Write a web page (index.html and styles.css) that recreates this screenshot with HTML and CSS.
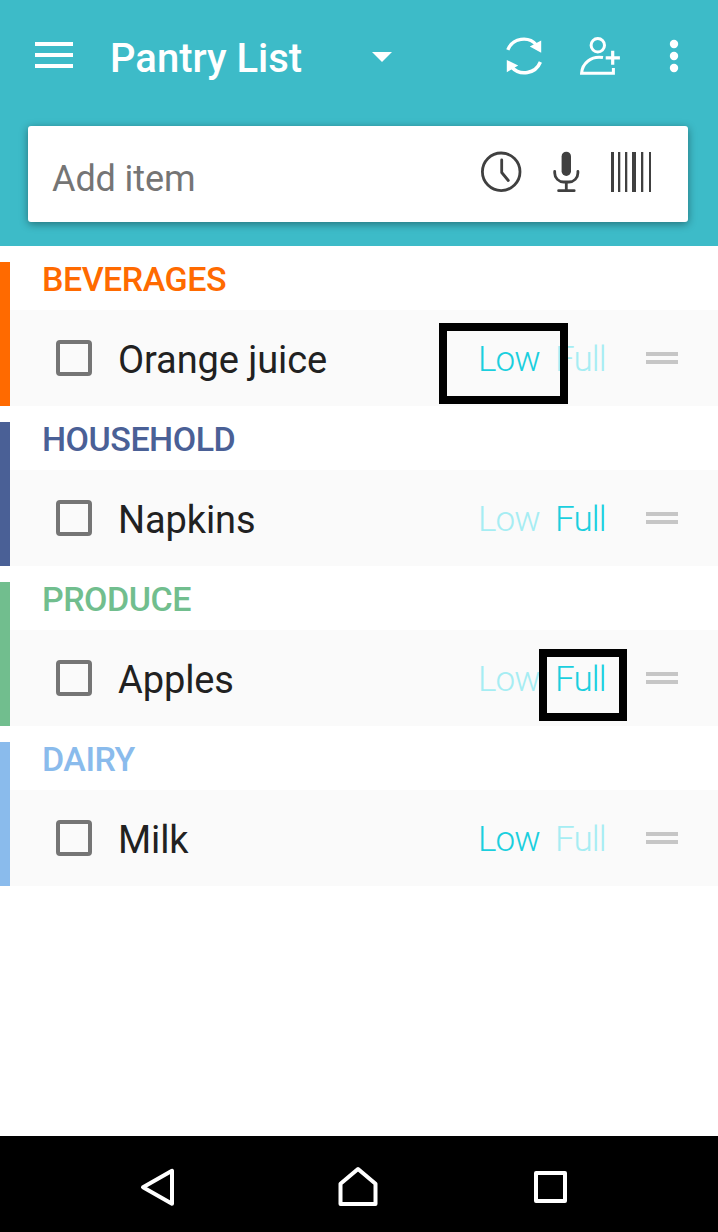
FILE: index.html
```
<!DOCTYPE html>
<html lang="en">
<head>
<meta charset="UTF-8">
<meta name="viewport" content="width=device-width, initial-scale=1.0">
<title>Pantry List</title>
<link rel="stylesheet" href="styles.css">
</head>
<body>

<header class="header">
  <div class="toolbar">
    <svg class="menu" width="38" height="26" viewBox="0 0 38 26" fill="#fff">
      <path d="M0 0h38v4H0zM0 11h38v4H0zM0 22h38v4H0z"/>
    </svg>
    <h1>Pantry List</h1>
    <svg class="caret" width="20" height="10" viewBox="0 0 20 10"><path d="M0 0h20L10 10z" fill="#fff"/></svg>
    <div class="actions">
      <svg width="40" height="40" viewBox="0 0 40 40" fill="none" stroke="#fff" stroke-width="3.4">
        <path d="M2.8 13.8A17.2 17.2 0 0 1 31.600 9M35.400 26A17.2 17.2 0 0 1 6.600 31"/>
        <path d="M36.2 4.6v12.2L24.8 10.5zM1.8 24v12.2L13.2 29.6z" fill="#fff" stroke="none"/>
      </svg>
      <svg width="42" height="40" viewBox="0 0 42 40" fill="none" stroke="#fff" stroke-width="3">
        <circle cx="17.8" cy="9.3" r="6.7"/>
        <path d="M23 21.6C11 19.5 2.2 27.5 1.6 37.2H33.4V32"/>
        <path d="M32.7 14.7v14M25.7 21.8h14.2" stroke-width="3.2"/>
      </svg>
      <svg width="10" height="40" viewBox="0 0 10 40" fill="#fff">
        <circle cx="5" cy="8" r="4.2"/>
        <circle cx="5" cy="20" r="4.2"/>
        <circle cx="5" cy="32" r="4.2"/>
      </svg>
    </div>
  </div>

  <div class="add-item">
    <span class="placeholder">Add item</span>
    <svg class="clock" width="42" height="42" viewBox="0 0 42 42" fill="none" stroke="#404040" stroke-width="2.8" stroke-linecap="round" stroke-linejoin="round">
      <circle cx="21.2" cy="20.8" r="18.8"/>
      <path d="M21.7 9v12.5l6.6 8"/>
    </svg>
    <svg class="mic" width="28" height="42" viewBox="0 0 28 42" fill="none" stroke="#404040" stroke-width="2.8" stroke-linecap="round">
      <rect x="9.6" y="0.7" width="9.4" height="24.3" rx="4.7" fill="#404040" stroke="none"/>
      <path d="M2.7 20.5v1.5c0 5 4 9 9 9h5.2c5 0 9-4 9-9v-1.5M14.3 31v8.7M6.6 39.7h15.6"/>
    </svg>
    <svg class="barcode" width="40" height="40" viewBox="0 0 40 40" fill="#404040">
      <path d="M0 0h3v40H0zM7 0h2.3v40H7zM14 0h2.3v40H14zM21 0h4v40h-4zM30 0h2.3v40H30zM38 0h2v40h-2z"/>
    </svg>
  </div>
</header>

<main>
  <section class="category beverages">
    <h2>BEVERAGES</h2>
    <div class="item">
      <span class="checkbox"></span>
      <span class="name">Orange juice</span>
      <span class="level low active">Low</span>
      <span class="level full">Full</span>
      <span class="handle"></span>
      <div class="highlight highlight-low"></div>
    </div>
  </section>

  <section class="category household">
    <h2>HOUSEHOLD</h2>
    <div class="item">
      <span class="checkbox"></span>
      <span class="name">Napkins</span>
      <span class="level low">Low</span>
      <span class="level full active">Full</span>
      <span class="handle"></span>
    </div>
  </section>

  <section class="category produce">
    <h2>PRODUCE</h2>
    <div class="item">
      <span class="checkbox"></span>
      <span class="name">Apples</span>
      <span class="level low">Low</span>
      <span class="level full active">Full</span>
      <span class="handle"></span>
      <div class="highlight highlight-full"></div>
    </div>
  </section>

  <section class="category dairy">
    <h2>DAIRY</h2>
    <div class="item">
      <span class="checkbox"></span>
      <span class="name">Milk</span>
      <span class="level low active">Low</span>
      <span class="level full">Full</span>
      <span class="handle"></span>
    </div>
  </section>
</main>

<nav class="navbar">
  <svg width="40" height="44" viewBox="0 0 40 44"><path d="M5 22.3L34 5.8v33z"/></svg>
  <svg class="home" width="44" height="44" viewBox="0 0 44 44"><path d="M4.500 39V18.800L22 4l17.500 14.800V39z"/></svg>
  <svg width="40" height="44" viewBox="0 0 40 44"><path d="M6 8h29v28H6z"/></svg>
</nav>

</body>
</html>
```
FILE: styles.css
```
* {
  box-sizing: border-box;
}
body {
  margin: 0;
  height: 1232px;
  display: flex;
  flex-direction: column;
  background-color: #fff;
  font-family: Roboto, "Liberation Sans", sans-serif;
}
svg {
  display: block;
  flex: none;
}
.header {
  height: 246px;
  padding: 0 30px 0 28px;
  background-color: #3dbbc8;
}
.toolbar {
  display: flex;
  align-items: center;
  height: 112px;
  padding: 0 9px 0 7px;
}
.menu {
  margin: 0 37px 2px 0;
}
h1 {
  width: 262px;
  margin: 6px 0 0;
  font-size: 40px;
  font-weight: 500;
  line-height: 48px;
  color: #fff;
}
.caret {
  margin-top: 2px;
}
.actions {
  display: flex;
  margin-left: auto;
}
.actions svg:nth-child(2) {
  margin: 0 47px 0 35px;
}
.add-item {
  display: flex;
  align-items: flex-start;
  height: 96px;
  margin-top: 14px;
  padding: 25px 37px 0 24px;
  background-color: #fff;
  border-radius: 3px;
  box-shadow: 0 2px 8px rgba(0, 0, 0, 0.4);
}
.placeholder {
  flex: 1;
  margin-top: 7px;
  font-size: 36px;
  line-height: 42px;
  letter-spacing: -0.1px;
  color: #757575;
}
.mic {
  margin: 0 31px 0 30px;
}
.barcode {
  margin-top: 1px;
}
.category {
  height: 144px;
  margin-top: 16px;
  border-left: 10px solid;
}
.category h2 {
  height: 48px;
  margin: 0;
  padding-left: 32px;
  font-size: 34px;
  font-weight: 500;
  line-height: 34px;
  letter-spacing: -0.5px;
}
.beverages {
  border-color: #ff6a00;
  color: #ff6a00;
}
.household {
  border-color: #4a6096;
  color: #4a6096;
}
.produce {
  border-color: #71be8e;
  color: #71be8e;
}
.dairy {
  border-color: #8abbec;
  color: #8abbec;
}
.item {
  position: relative;
  display: flex;
  align-items: center;
  height: 96px;
  padding: 0 40px 0 46px;
  background-color: #fafafa;
}
.checkbox {
  width: 36px;
  height: 36px;
  border: 4px solid #757575;
  border-radius: 4px;
}
.name {
  flex: 1;
  margin: 4px 0 0 26px;
  font-size: 38px;
  line-height: 46px;
  letter-spacing: -0.1px;
  color: #212121;
}
.level {
  margin-top: 3px;
  font-size: 35px;
  font-weight: 300;
  line-height: 41px;
  letter-spacing: -0.9px;
  color: #a6edf3;
}
.level.active {
  color: #1bcfde;
}
.low {
  width: 77px;
}
.full {
  width: 91px;
}
.handle {
  width: 32px;
  height: 12px;
  border: solid #c6c6c6;
  border-width: 4px 0;
}
/* callout boxes drawn over the list */
.highlight {
  position: absolute;
  border: 8px solid #000;
}
.highlight-low {
  top: 13px;
  left: 429px;
  width: 129px;
  height: 81px;
}
.highlight-full {
  top: 19px;
  left: 529px;
  width: 88px;
  height: 72px;
}
.navbar {
  display: flex;
  justify-content: space-between;
  height: 96px;
  margin-top: auto;
  padding: 29px 148px 0 138px;
  background-color: #000;
}
.navbar svg {
  fill: none;
  stroke: #fff;
  stroke-width: 4;
  stroke-linejoin: round;
}
.navbar .home {
  margin-left: 8px;
}
```
